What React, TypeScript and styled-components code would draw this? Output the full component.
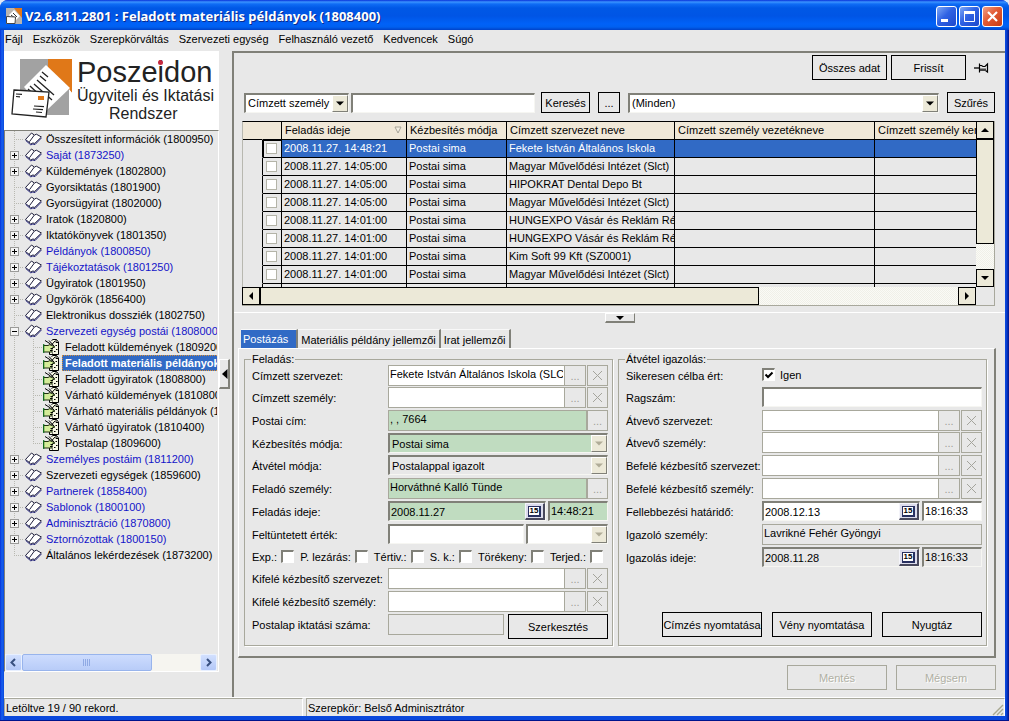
import React from 'react';
import styled, { createGlobalStyle, css } from 'styled-components';

const face = '#e8e8e8';
const shadow = '#808078';
const softLine = '#a8a89c';
const cream = '#ece9d8';
const navy = '#316ac5';
const green = '#c0dcc0';

const GlobalStyle = createGlobalStyle`
  * { box-sizing: border-box; }
  body { margin: 0; background: #dfe8f6; }
  body, button, input, select, table {
    font-family: "Liberation Sans", Arial, sans-serif;
    font-size: 11px;
    line-height: 14px;
    color: #000;
  }
  button, input, select { margin: 0; border-radius: 0; }
`;

/* ---------- window frame ---------- */

const Window = styled.div`
  display: flex;
  flex-direction: column;
  min-height: 100vh;
  padding: 0 4px 4px;
  background: linear-gradient(90deg, #0831d9 0, #1660ee 2px, #0a48dc 4px, #0a48dc calc(100% - 4px), #0a48dc calc(100% - 3px), #00138c 100%);
  border-bottom: 1px solid #00138c;
  border-radius: 8px 8px 0 0;
`;

const TitleBar = styled.header`
  display: flex;
  align-items: center;
  gap: 3px;
  height: 30px;
  margin: 0 -4px;
  padding: 2px 6px 0;
  border-radius: 8px 8px 0 0;
  background: linear-gradient(180deg, #0831d9 0, #3a93ff 2px, #0f6cf5 4px, #0058e6 8px, #0055e5 16px, #0062f8 24px, #0060f0 27px, #0042c8 30px);
`;

const Title = styled.h1`
  flex: 1;
  margin: 0;
  color: #fff;
  font-family: "Noto Sans", "Open Sans", sans-serif;
  font-size: 13px;
  font-weight: 700;
  line-height: 20px;
  text-shadow: 1px 1px 0 #0a2a8c;
  white-space: nowrap;
`;

const TitleButtons = styled.div`
  display: flex;
  gap: 2px;
`;

const CaptionButton = styled.button<{ $danger?: boolean }>`
  width: 21px;
  height: 21px;
  padding: 0;
  border: 1px solid #fff;
  border-radius: 3px;
  background: ${p => (p.$danger
    ? 'linear-gradient(135deg, #f0a088 0, #e25a34 45%, #c83c14 100%)'
    : 'linear-gradient(135deg, #7ea8f6 0, #2f62e4 45%, #1d48cc 100%)')};
  svg { display: block; }
`;

const MenuBar = styled.nav`
  display: flex;
  gap: 10px;
  height: 20px;
  padding: 2px 0 0 1px;
  background: ${face};
  a { color: #000; text-decoration: none; white-space: nowrap; }
`;

const Main = styled.main`
  flex: 1;
  display: flex;
  background: ${face};
`;

const StatusBar = styled.footer`
  display: flex;
  gap: 3px;
  height: 19px;
  border-top: 1px solid #fff;
  background: ${face};
`;

const StatusPanel = styled.div<{ $grow?: boolean }>`
  ${p => (p.$grow ? 'flex: 1;' : 'width: 299px;')}
  display: flex;
  justify-content: space-between;
  align-items: flex-end;
  border-top: 1px solid ${softLine};
  border-left: 1px solid ${softLine};
  border-right: 1px solid #fff;
  padding: 1px 0 0 1px;
  white-space: nowrap;
  span { align-self: center; }
`;

/* ---------- navigation ---------- */

const Side = styled.aside`
  display: flex;
  flex-direction: column;
  width: 215px;
  flex-shrink: 0;
`;

const Brand = styled.div`
  display: flex;
  gap: 4px;
  height: 79px;
  padding: 6px 0 0 6px;
  margin-top: 1px;
  background: #fff;
`;

const BrandText = styled.div`
  flex: 1;
  color: #222;
  white-space: nowrap;
`;

const BrandName = styled.div`
  position: relative;
  font-size: 29px;
  line-height: 30px;
`;

const BrandDot = styled.span`
  position: absolute;
  left: 81px;
  top: 3px;
  width: 5px;
  height: 5px;
  border-radius: 50%;
  background: #c42840;
`;

const BrandLine = styled.div<{ $indent?: boolean }>`
  font-size: 16px;
  line-height: 18px;
  ${p => (p.$indent ? 'padding-left: 32px;' : '')}
`;

const TreeBox = styled.div`
  flex: 1;
  display: flex;
  flex-direction: column;
  justify-content: space-between;
  margin-bottom: 25px;
  padding: 0 1px 0 0;
  border: 1px solid ${shadow};
  border-right-color: #fff;
  border-bottom-color: #fff;
  overflow: hidden;
`;

const TreeList = styled.ul`
  list-style: none;
  margin: 0;
  padding: 0;
  overflow: hidden;
`;

const TreeRow = styled.li`
  display: flex;
  height: 16px;
  overflow: hidden;
`;

const Branch = styled.span<{ $last?: boolean }>`
  position: relative;
  width: 19px;
  flex-shrink: 0;
  background:
    repeating-linear-gradient(180deg, #b8b8b0 0 1px, transparent 1px 2px) 9px 0 / 1px ${p => (p.$last ? '8px' : '16px')} no-repeat,
    repeating-linear-gradient(90deg, #b8b8b0 0 1px, transparent 1px 2px) 9px 8px / 10px 1px no-repeat;
`;

const Trunk = styled.span`
  width: 19px;
  flex-shrink: 0;
  background: repeating-linear-gradient(180deg, #b8b8b0 0 1px, transparent 1px 2px) 9px 0 / 1px 16px no-repeat;
`;

const Expander = styled.button`
  position: absolute;
  left: 5px;
  top: 4px;
  width: 9px;
  height: 9px;
  padding: 0;
  border: 1px solid #9a9a98;
  background: #f4f4f4;
  svg { display: block; }
`;

const TreeIcon = styled.span`
  width: 19px;
  flex-shrink: 0;
  svg { display: block; }
`;

const TreeLink = styled.a<{ $blue?: boolean; $selected?: boolean }>`
  padding: 1px 2px 1px 3px;
  color: ${p => (p.$blue ? '#1414c8' : '#000')};
  text-decoration: none;
  white-space: nowrap;
  ${p => p.$selected && css`
    background: ${navy};
    color: #fff;
    font-weight: 700;
    outline: 1px dotted #d89038;
    outline-offset: -1px;
  `}
`;

const SideScroll = styled.div`
  display: flex;
  height: 17px;
  background: #f6f5f0;
`;

const XpButton = styled.button`
  width: 17px;
  height: 17px;
  padding: 0;
  border: 1px solid #e8f0ff;
  border-radius: 2px;
  background: linear-gradient(180deg, #d2e0fe, #b4c8f8);
  svg { display: block; margin: auto; }
`;

const XpThumb = styled.div`
  width: 130px;
  display: flex;
  align-items: center;
  justify-content: center;
  border: 1px solid #98b4ec;
  border-radius: 2px;
  background: linear-gradient(180deg, #cddcfe, #b8ccf8);
`;

const Grow = styled.div`
  flex: 1;
`;

const SideSplitter = styled.div`
  width: 13px;
  flex-shrink: 0;
  display: flex;
  align-items: center;
`;

const CollapseSide = styled.button`
  width: 11px;
  height: 30px;
  padding: 0;
  border: 1px solid #fff;
  border-right: 2px solid ${shadow};
  border-bottom: 2px solid ${shadow};
  background: ${face};
  svg { display: block; }
`;

/* ---------- work area ---------- */

const Work = styled.section`
  flex: 1;
  min-width: 0;
  display: flex;
  flex-direction: column;
  margin-top: 1px;
  padding: 2px 9px 0 4px;
  border-top: 2px solid ${shadow};
  border-left: 2px solid ${shadow};
`;

const ToolRow = styled.div`
  display: flex;
  justify-content: flex-end;
  align-items: center;
  gap: 4px;
`;

const PushButton = styled.button<{ $w: number; $small?: boolean }>`
  width: ${p => p.$w}px;
  height: ${p => (p.$small ? 21 : 25)}px;
  padding: 0;
  border: 1px solid #000;
  background: ${face};
  white-space: nowrap;
  &:disabled { border-color: ${softLine}; color: #b0b0a4; text-shadow: 1px 1px 0 #fff; }
`;

const PinButton = styled.button`
  width: 26px;
  height: 25px;
  padding: 0;
  border: 0;
  background: none;
  svg { display: block; margin-left: 4px; }
`;

const FilterRow = styled.form`
  display: flex;
  align-items: center;
  gap: 8px;
  margin: 12px 1px 0 6px;
`;

const SearchPair = styled.div`
  display: flex;
  gap: 2px;
  margin-right: -2px;
`;

type Tone = 'white' | 'green' | 'face';
const toneColor = (t?: Tone) => (t === 'green' ? green : t === 'face' ? face : '#fff');

const sunken = css`
  border: 1px solid #f6f6f2;
  border-top: 2px solid ${shadow};
  border-left: 2px solid ${shadow};
`;

const SelectBox = styled.div<{ $w?: number }>`
  position: relative;
  display: flex;
  min-width: 0;
  ${p => (p.$w ? `width: ${p.$w}px;` : 'flex: 1;')}
  select {
    appearance: none;
    flex: 1;
    min-width: 0;
    height: 20px;
    padding: 0 17px 0 2px;
    ${sunken}
    opacity: 1;
    color: #000;
  }
`;

const StyledSelect = styled.select<{ $tone?: Tone }>`
  background: ${p => toneColor(p.$tone)};
`;

const SelectArrow = styled.span`
  position: absolute;
  right: 1px;
  top: 2px;
  width: 16px;
  height: 17px;
  border: 1px solid #fff;
  border-right-color: ${shadow};
  border-bottom-color: ${shadow};
  background: ${cream};
  pointer-events: none;
  svg { display: block; }
`;

const TextInput = styled.input<{ $w?: number; $tone?: Tone }>`
  ${p => (p.$w ? `width: ${p.$w}px;` : 'flex: 1;')}
  min-width: 0;
  height: 20px;
  padding: 0 1px 1px;
  ${sunken}
  background: ${p => toneColor(p.$tone)};
`;

/* ---------- grid ---------- */

const GridFrame = styled.div`
  display: grid;
  grid-template-columns: 1fr 18px;
  grid-template-rows: 166px 18px;
  margin: 8px 1px 0 4px;
  border-right: 1px solid ${softLine};
  border-bottom: 1px solid ${softLine};
`;

const GridView = styled.div`
  overflow: hidden;
  border-left: 1px solid #b8b8b0;
  border-top: 1px solid #000;
`;

const Table = styled.table`
  width: 833px;
  table-layout: fixed;
  border-collapse: separate;
  border-spacing: 0;
`;

const Th = styled.th<{ $bare?: boolean }>`
  height: 18px;
  padding: 0 4px 1px 3px;
  border-right: 1px solid ${p => (p.$bare ? '#f0e8d8' : '#000')};
  border-bottom: 1px solid #000;
  background: #f0e8d8;
  font-weight: 400;
  text-align: left;
  white-space: nowrap;
  overflow: hidden;
`;

const HeadFlex = styled.span`
  display: flex;
  justify-content: space-between;
  align-items: center;
`;

const Tr = styled.tr<{ $selected?: boolean }>`
  ${p => p.$selected && css`
    td:nth-child(n+3) { background: ${navy}; color: #fff; }
    td:nth-child(2) { box-shadow: inset 1px 1px 0 #000; }
  `}
`;

const Td = styled.td<{ $gutter?: boolean }>`
  height: 18px;
  padding: 0 0 1px 2px;
  border-right: 1px solid #000;
  border-bottom: 1px solid ${p => (p.$gutter ? face : '#000')};
  white-space: nowrap;
  overflow: hidden;
`;

const RowCheck = styled.input`
  appearance: none;
  display: block;
  width: 11px;
  height: 11px;
  margin: 1px 0 0 1px;
  border: 1px solid #b4b4a8;
  background: #fff;
`;

const dither = css`
  background: repeating-conic-gradient(#f0f0e8 0 25%, #fafaf6 0 50%) 0 0 / 2px 2px;
`;

const VScroll = styled.div`
  display: flex;
  flex-direction: column;
  ${dither}
`;

const HScroll = styled.div`
  display: flex;
  ${dither}
`;

const FlatButton = styled.button`
  width: 18px;
  height: 18px;
  padding: 0;
  border: 1px solid #000;
  background: ${cream};
  svg { display: block; }
`;

const FlatThumb = styled.div<{ $h?: string; $w?: string }>`
  height: ${p => p.$h ?? 'auto'};
  width: ${p => p.$w ?? 'auto'};
  border: 1px solid #000;
  background: ${cream};
`;

const Splitter = styled.div`
  display: flex;
  justify-content: center;
  height: 17px;
  margin: 6px -9px 0 -4px;
  border-top: 1px solid #fff;
`;

const CollapseBelow = styled.button`
  width: 30px;
  height: 10px;
  padding: 0;
  border: 1px solid #fff;
  border-right-color: ${shadow};
  border-bottom: 2px solid ${shadow};
  background: ${face};
  svg { display: block; margin: auto; }
`;

/* ---------- tabs and form ---------- */

const Tabs = styled.div`
  display: flex;
  height: 19px;
  padding-left: 3px;
`;

const Tab = styled.button<{ $active?: boolean }>`
  height: 19px;
  padding: ${p => (p.$active ? '0 8px 1px 2px' : '1px 3px 0')};
  border: 0;
  border-top: 1px solid #f8f8f8;
  border-right: 2px solid ${shadow};
  background: ${p => (p.$active ? navy : face)};
  color: ${p => (p.$active ? '#fff' : '#000')};
  white-space: nowrap;
`;

const TabPanel = styled.div`
  display: grid;
  grid-template-columns: 1fr 1fr;
  gap: 5px;
  padding: 4px 7px 10px 5px;
  border: 1px solid #fff;
  border-right: 2px solid ${shadow};
  border-bottom: 2px solid ${shadow};
`;

const Group = styled.fieldset`
  display: flex;
  flex-direction: column;
  min-width: 0;
  margin: 0;
  padding: 0 4px 8px 7px;
  border: 1px solid ${softLine};
  box-shadow: 1px 1px 0 #fff;
  legend { margin-left: -1px; padding: 0 1px; line-height: 12px; }
`;

const Row = styled.div<{ $tight?: boolean }>`
  display: flex;
  align-items: flex-start;
  height: ${p => (p.$tight ? 22 : 23)}px;
`;

const Label = styled.label`
  width: 136px;
  flex-shrink: 0;
  padding-top: 4px;
  white-space: nowrap;
`;

const Fields = styled.div<{ $gap?: number }>`
  flex: 1;
  min-width: 0;
  display: flex;
  gap: ${p => p.$gap ?? 0}px;
`;

const Memo = styled.input<{ $tone?: Tone }>`
  flex: 1;
  min-width: 0;
  height: 21px;
  padding: 0 1px 3px;
  border: 1px solid ${softLine};
  background: ${p => toneColor(p.$tone)};
  text-overflow: clip;
`;

const MemoButton = styled.button`
  width: 21px;
  height: 21px;
  padding: 0;
  border: 1px solid ${softLine};
  background: ${face};
  color: #a0a098;
  &:not(:last-child) { border-left: 0; margin-right: 1px; }
  svg { display: block; margin: auto; }
`;

const DateBox = styled.div<{ $tone?: Tone }>`
  flex: 1;
  min-width: 0;
  display: flex;
  height: 20px;
  ${sunken}
  background: ${p => toneColor(p.$tone)};
  input { flex: 1; min-width: 0; border: 0; padding: 0 1px; background: transparent; }
`;

const CalendarButton = styled.button`
  width: 20px;
  height: 17px;
  padding: 0;
  border: 1px solid #f4f4fa;
  border-right: 2px solid #48485c;
  border-bottom: 2px solid #48485c;
  background: #dcdcec;
`;

const DayGlyph = styled.span`
  display: block;
  width: 13px;
  height: 11px;
  margin: 0 auto;
  border: 1px solid #283060;
  border-width: 1px 2px 2px 1px;
  background: #fff;
  font-size: 8px;
  font-weight: 700;
  line-height: 8px;
`;

const ChecksRow = styled.div`
  display: flex;
  justify-content: space-between;
  height: 21px;
  padding-right: 5px;
`;

const CheckLabel = styled.label<{ $after?: boolean }>`
  display: flex;
  align-items: center;
  gap: ${p => (p.$after ? 5 : 4)}px;
  height: 19px;
  white-space: nowrap;
`;

const Check = styled.input`
  appearance: none;
  width: 13px;
  height: 13px;
  ${sunken}
  border-right-color: #fff;
  border-bottom-color: #fff;
  background: #fff;
  &:checked {
    background: #fff url("data:image/svg+xml,%3Csvg xmlns='http://www.w3.org/2000/svg' viewBox='0 0 10 10'%3E%3Cpath d='M1.5 4.5L4 7L8.5 2.5' fill='none' stroke='black' stroke-width='2'/%3E%3C/svg%3E") center / 10px 10px no-repeat;
  }
`;

const GroupButtons = styled.div`
  display: flex;
  justify-content: flex-end;
  gap: 10px;
  margin-top: auto;
`;

const ActionRow = styled.div`
  display: flex;
  justify-content: flex-end;
  gap: 9px;
  padding: 7px 0 7px;
`;

/* ---------- drawings ---------- */

const BookIcon = () => (
  <svg width="19" height="16" viewBox="0 0 19 16">
    <path d="M1.5 8.5L7.5 2L10 3.4L12.5 3L17.5 6L10.5 12.5L8.8 12L7 13Z" fill="#fff" />
    <path d="M6.5 12.4L1.5 8.5L7.5 2L10 3.8M5.4 10.8L10.4 4L12.4 3.2L17.4 6L10.8 12.4L8.8 12L6.8 13" fill="none" stroke="#20203c" />
    <path d="M1.6 9.4L6.8 13.9L8.8 13L11 13.6L17.4 7" fill="none" stroke="#28287c" />
  </svg>
);

const PostIcon = () => (
  <svg width="17" height="16" viewBox="0 0 17 16">
    <path d="M8.5 1.5L10 0.5H13.5L15.5 3V15.5H6.5V13" fill="#f8f8e4" stroke="#000" />
    <path d="M13 0.5V3.5H15.5M11 12.5H12.5M13 10.5H14.5M9 14H10M12.5 6.5H14" fill="none" stroke="#000" />
    <path d="M0.5 6.5H5L7 5.5L12 8L9 9V13H0.5Z" fill="#d4ec98" stroke="#203010" />
    <path d="M0.7 5V14" stroke="#107020" strokeWidth="1.2" />
    <path d="M2 1.5L7.5 5M7.5 9.5H10M7 11.5H9.5M12 2L8 6.5M6 1.5L11 7" stroke="#000" />
  </svg>
);

const LogoArt = () => (
  <svg width="63" height="64" viewBox="0 0 63 64">
    <rect x="10" y="2" width="49" height="56" fill="#a2a2a2" />
    <path d="M38 2H62V36L38 11Z" fill="#e07818" />
    <path d="M59 32L62 36V58H59Z" fill="#fff" />
    <path d="M36 8L60 31L36 54L14 30Z" fill="#fff" />
    <path d="M32 15L38 20M30 19L36 24M27 23L44 38M24 27L42 43M20 29L37 45M18 32L32 45" stroke="#222" strokeWidth="1.3" />
    <path d="M4 33L39 35L36 60L2 57Z" fill="#fff" stroke="#222" strokeWidth="1.3" />
    <rect x="28" y="39" width="6" height="4" fill="#e07818" />
    <path d="M6 37L12 37.4M6 39.5L10 39.8M24 49L34 49.6M23 52L33 52.7M26 55L32 55.5" stroke="#222" strokeWidth="1.2" />
  </svg>
);

const AppIcon = () => (
  <svg width="16" height="16" viewBox="0 0 16 16">
    <rect width="16" height="16" fill="#b8b4b0" />
    <path d="M8 0H16V10Z" fill="#e07818" />
    <path d="M8 2L14 8L8 14L3 7Z" fill="#fff" />
    <path d="M7 5L11 9M5 7L10 11" stroke="#333" />
    <path d="M0.5 8.5L9.5 9L9 15.5H0.5Z" fill="#fff" stroke="#444" />
  </svg>
);

const PinIcon = () => (
  <svg width="18" height="14" viewBox="0 0 18 14">
    <path d="M0 7H5" stroke="#000" strokeWidth="1.3" />
    <path d="M5.5 2.5V11.5M6 4.5H7.5L9 5.5H11L13.5 3V11L11.5 9.5H6" fill="none" stroke="#000" strokeWidth="1.2" />
    <path d="M6 7.5H12V10H6Z" fill="#444" />
  </svg>
);

const Triangle = ({ dir, w = 16, h = 16, color = '#000' }: { dir: 'up' | 'down' | 'left' | 'right'; w?: number; h?: number; color?: string }) => {
  const d = { up: 'M-4 2H4L0 -2Z', down: 'M-4 -2H4L0 2Z', left: 'M2 -4V4L-2 0Z', right: 'M-2 -4V4L2 0Z' }[dir];
  return (
    <svg width={w} height={h} viewBox={`${-w / 2} ${-h / 2} ${w} ${h}`}>
      <path d={d} fill={color} />
    </svg>
  );
};

const CrossIcon = () => (
  <svg width="11" height="11" viewBox="0 0 11 11">
    <path d="M1 1L10 10M10 1L1 10" stroke="#a4a49c" />
  </svg>
);

/* ---------- data ---------- */

type Node = { text: string; blue?: boolean; open?: boolean; leaf?: boolean; child?: boolean; selected?: boolean };

const nodes: Node[] = [
  { text: 'Összesített információk (1800950)', leaf: true },
  { text: 'Saját (1873250)', blue: true },
  { text: 'Küldemények (1802800)' },
  { text: 'Gyorsiktatás (1801900)', leaf: true },
  { text: 'Gyorsügyirat (1802000)', leaf: true },
  { text: 'Iratok (1820800)' },
  { text: 'Iktatókönyvek (1801350)' },
  { text: 'Példányok (1800850)', blue: true },
  { text: 'Tájékoztatások (1801250)', blue: true },
  { text: 'Ügyiratok (1801950)' },
  { text: 'Ügykörök (1856400)' },
  { text: 'Elektronikus dossziék (1802750)', leaf: true },
  { text: 'Szervezeti egység postái (1808000)', blue: true, open: true },
  { text: 'Feladott küldemények (1809200)', child: true },
  { text: 'Feladott materiális példányok (1808400)', child: true, selected: true },
  { text: 'Feladott ügyiratok (1808800)', child: true },
  { text: 'Várható küldemények (1810800)', child: true },
  { text: 'Várható materiális példányok (1810000)', child: true },
  { text: 'Várható ügyiratok (1810400)', child: true },
  { text: 'Postalap (1809600)', child: true },
  { text: 'Személyes postáim (1811200)', blue: true },
  { text: 'Szervezeti egységek (1859600)' },
  { text: 'Partnerek (1858400)', blue: true },
  { text: 'Sablonok (1800100)', blue: true },
  { text: 'Adminisztráció (1870800)', blue: true },
  { text: 'Sztornózottak (1800150)', blue: true },
  { text: 'Általános lekérdezések (1873200)', leaf: true },
];

const records = [
  ['2008.11.27. 14:48:21', 'Fekete István Általános Iskola'],
  ['2008.11.27. 14:05:00', 'Magyar Művelődési Intézet (Slct)'],
  ['2008.11.27. 14:05:00', 'HIPOKRAT Dental Depo Bt'],
  ['2008.11.27. 14:05:00', 'Magyar Művelődési Intézet (Slct)'],
  ['2008.11.27. 14:01:00', 'HUNGEXPO Vásár és Reklám Részvénytársaság'],
  ['2008.11.27. 14:01:00', 'HUNGEXPO Vásár és Reklám Részvénytársaság'],
  ['2008.11.27. 14:01:00', 'Kim Soft 99 Kft (SZ0001)'],
  ['2008.11.27. 14:01:00', 'Magyar Művelődési Intézet (Slct)'],
];

const columnWidths = [20, 19, 125, 100, 168, 200, 201];

const Col = styled.col<{ $w: number }>`
  width: ${p => p.$w}px;
`;

const menu = ['Fájl', 'Eszközök', 'Szerepkörváltás', 'Szervezeti egység', 'Felhasználó vezető', 'Kedvencek', 'Súgó'];

/* ---------- composed parts ---------- */

const TreeItem = ({ node, last }: { node: Node; last: boolean }) => (
  <TreeRow>
    {node.child && <Trunk />}
    <Branch $last={last}>
      {!node.leaf && !node.child && (
        <Expander aria-label={node.open ? 'Bezárás' : 'Kinyitás'}>
          <svg width="7" height="7" viewBox="0 0 7 7">
            <path d={node.open ? 'M1 3.5H6' : 'M1 3.5H6M3.5 1V6'} stroke="#000" />
          </svg>
        </Expander>
      )}
    </Branch>
    <TreeIcon>{node.child ? <PostIcon /> : <BookIcon />}</TreeIcon>
    <TreeLink href="#" $blue={node.blue} $selected={node.selected}>{node.text}</TreeLink>
  </TreeRow>
);

const Dropdown = ({ id, label, value, w, tone, disabled }: { id?: string; label?: string; value: string; w?: number; tone?: Tone; disabled?: boolean }) => (
  <SelectBox $w={w}>
    <StyledSelect id={id} aria-label={label} $tone={tone} disabled={disabled}>
      <option>{value}</option>
    </StyledSelect>
    <SelectArrow><Triangle dir="down" w={14} h={15} color={disabled ? '#b0ac98' : '#000'} /></SelectArrow>
  </SelectBox>
);

const LookupRow = ({ id, label, value = '', tone, tight, clear = true }: { id: string; label: string; value?: string; tone?: Tone; tight?: boolean; clear?: boolean }) => (
  <Row $tight={tight}>
    <Label htmlFor={id}>{label}</Label>
    <Fields>
      <Memo id={id} defaultValue={value} $tone={tone} />
      <MemoButton disabled>...</MemoButton>
      {clear && <MemoButton disabled aria-label="Törlés"><CrossIcon /></MemoButton>}
    </Fields>
  </Row>
);

const DateRow = ({ id, label, date, time, tone }: { id: string; label: string; date: string; time: string; tone?: Tone }) => (
  <Row>
    <Label htmlFor={id}>{label}</Label>
    <Fields $gap={2}>
      <DateBox $tone={tone}>
        <input id={id} defaultValue={date} />
        <CalendarButton aria-label="Naptár"><DayGlyph>15</DayGlyph></CalendarButton>
      </DateBox>
      <TextInput $w={60} $tone={tone} aria-label={`${label} idő`} defaultValue={time} />
    </Fields>
  </Row>
);

export default function App() {
  return (
    <>
      <GlobalStyle />
      <Window>
        <TitleBar>
          <AppIcon />
          <Title>V2.6.811.2801 : Feladott materiális példányok (1808400)</Title>
          <TitleButtons>
            <CaptionButton aria-label="Kis méret">
              <svg width="19" height="19" viewBox="0 0 19 19"><path d="M4 13.5H11" stroke="#fff" strokeWidth="3" /></svg>
            </CaptionButton>
            <CaptionButton aria-label="Teljes méret">
              <svg width="19" height="19" viewBox="0 0 19 19"><path d="M4.5 5V14.5H14.5V5" fill="none" stroke="#fff" /><path d="M4 5.5H15" stroke="#fff" strokeWidth="3" /></svg>
            </CaptionButton>
            <CaptionButton $danger aria-label="Bezárás">
              <svg width="19" height="19" viewBox="0 0 19 19"><path d="M5 5L14 14M14 5L5 14" stroke="#fff" strokeWidth="2.2" /></svg>
            </CaptionButton>
          </TitleButtons>
        </TitleBar>
        <MenuBar>
          {menu.map(m => <a href="#" key={m}>{m}</a>)}
        </MenuBar>
        <Main>
          <Side>
            <Brand>
              <LogoArt />
              <BrandText>
                <BrandName>Poszeidon<BrandDot /></BrandName>
                <BrandLine>Ügyviteli és Iktatási</BrandLine>
                <BrandLine $indent>Rendszer</BrandLine>
              </BrandText>
            </Brand>
            <TreeBox>
              <TreeList>
                {nodes.map((n, i) => (
                  <TreeItem key={n.text} node={n} last={i === nodes.length - 1 || n.text.startsWith('Postalap')} />
                ))}
              </TreeList>
              <SideScroll>
                <XpButton aria-label="Balra"><svg width="9" height="9" viewBox="0 0 9 9"><path d="M6 1L2.5 4.5L6 8" fill="none" stroke="#385080" strokeWidth="2" /></svg></XpButton>
                <XpThumb><svg width="8" height="7" viewBox="0 0 8 7"><path d="M0.5 0V7M2.5 0V7M4.5 0V7M6.5 0V7" stroke="#90aae4" /></svg></XpThumb>
                <Grow />
                <XpButton aria-label="Jobbra"><svg width="9" height="9" viewBox="0 0 9 9"><path d="M3 1L6.5 4.5L3 8" fill="none" stroke="#385080" strokeWidth="2" /></svg></XpButton>
              </SideScroll>
            </TreeBox>
          </Side>
          <SideSplitter>
            <CollapseSide aria-label="Oldalsáv elrejtése">
              <svg width="8" height="27" viewBox="0 0 8 27"><path d="M7.5 9V19L2 14Z" /></svg>
            </CollapseSide>
          </SideSplitter>
          <Work>
            <ToolRow>
              <PushButton $w={75}>Összes adat</PushButton>
              <PushButton $w={75}>Frissít</PushButton>
              <PinButton aria-label="Rögzítés"><PinIcon /></PinButton>
            </ToolRow>
            <FilterRow onSubmit={e => e.preventDefault()}>
              <SearchPair>
                <Dropdown label="Keresési mező" value="Címzett személy vezetékneve" w={105} />
                <TextInput $w={184} aria-label="Keresett szöveg" />
              </SearchPair>
              <PushButton $w={49} $small>Keresés</PushButton>
              <PushButton $w={22} $small>...</PushButton>
              <Dropdown label="Szűrő" value="(Minden)" />
              <PushButton $w={48} $small>Szűrés</PushButton>
            </FilterRow>
            <GridFrame>
              <GridView>
                <Table>
                  <colgroup>
                    {columnWidths.map((w, i) => <Col key={i} $w={w} />)}
                  </colgroup>
                  <thead>
                    <tr>
                      <Th $bare /><Th />
                      <Th><HeadFlex>Feladás ideje<svg width="8" height="8" viewBox="0 0 8 8"><path d="M1 1H7L4 7Z" fill="#f4f0e4" stroke="#a8a498" /></svg></HeadFlex></Th>
                      <Th>Kézbesítés módja</Th>
                      <Th>Címzett szervezet neve</Th>
                      <Th>Címzett személy vezetékneve</Th>
                      <Th>Címzett személy keresztneve</Th>
                    </tr>
                  </thead>
                  <tbody>
                    {records.map((r, i) => (
                      <Tr key={i} $selected={i === 0}>
                        <Td $gutter />
                        <Td><RowCheck type="checkbox" aria-label={`${i + 1}. sor kijelölése`} /></Td>
                        <Td>{r[0]}</Td>
                        <Td>Postai sima</Td>
                        <Td>{r[1]}</Td>
                        <Td /><Td />
                      </Tr>
                    ))}
                    <Tr><Td $gutter /><Td /><Td /><Td /><Td /><Td /><Td /></Tr>
                  </tbody>
                </Table>
              </GridView>
              <VScroll>
                <FlatButton aria-label="Fel"><Triangle dir="up" /></FlatButton>
                <FlatThumb $h="105px" />
                <Grow />
                <FlatButton aria-label="Le"><Triangle dir="down" /></FlatButton>
              </VScroll>
              <HScroll>
                <FlatButton aria-label="Balra"><Triangle dir="left" /></FlatButton>
                <FlatThumb $w="68%" />
                <Grow />
                <FlatButton aria-label="Jobbra"><Triangle dir="right" /></FlatButton>
              </HScroll>
            </GridFrame>
            <Splitter>
              <CollapseBelow aria-label="Részletek elrejtése"><Triangle dir="down" w={16} h={6} /></CollapseBelow>
            </Splitter>
            <Tabs role="tablist">
              <Tab role="tab" aria-selected $active>Postázás</Tab>
              <Tab role="tab">Materiális példány jellemzői</Tab>
              <Tab role="tab">Irat jellemzői</Tab>
            </Tabs>
            <TabPanel>
              <Group>
                <legend>Feladás:</legend>
                <LookupRow id="org" label="Címzett szervezet:" value="Fekete István Általános Iskola (SLCT)" tight />
                <LookupRow id="person" label="Címzett személy:" />
                <LookupRow id="addr" label="Postai cím:" value=", , 7664" tone="green" clear={false} />
                <Row $tight>
                  <Label htmlFor="mode">Kézbesítés módja:</Label>
                  <Fields><Dropdown id="mode" value="Postai sima" tone="green" disabled /></Fields>
                </Row>
                <Row>
                  <Label htmlFor="receipt">Átvétel módja:</Label>
                  <Fields><Dropdown id="receipt" value="Postalappal igazolt" tone="face" disabled /></Fields>
                </Row>
                <LookupRow id="sender" label="Feladó személy:" value="Horváthné Kalló Tünde" tone="green" clear={false} />
                <DateRow id="sent" label="Feladás ideje:" date="2008.11.27" time="14:48:21" tone="green" />
                <Row>
                  <Label htmlFor="value">Feltüntetett érték:</Label>
                  <Fields $gap={2}>
                    <TextInput id="value" />
                    <Dropdown label="Pénznem" value="" w={82} disabled />
                  </Fields>
                </Row>
                <ChecksRow>
                  {['Exp.:', 'P. lezárás:', 'Tértiv.:', 'S. k.:', 'Törékeny:', 'Terjed.:'].map(t => (
                    <CheckLabel key={t}>{t}<Check type="checkbox" /></CheckLabel>
                  ))}
                </ChecksRow>
                <LookupRow id="outorg" label="Kifelé kézbesítő szervezet:" />
                <LookupRow id="outperson" label="Kifelé kézbesítő személy:" />
                <Row>
                  <Label htmlFor="card">Postalap iktatási száma:</Label>
                  <Fields $gap={4}>
                    <Memo id="card" $tone="face" />
                    <PushButton $w={100}>Szerkesztés</PushButton>
                  </Fields>
                </Row>
              </Group>
              <Group>
                <legend>Átvétel igazolás:</legend>
                <Row $tight>
                  <Label htmlFor="ok">Sikeresen célba ért:</Label>
                  <CheckLabel $after><Check id="ok" type="checkbox" defaultChecked />Igen</CheckLabel>
                </Row>
                <Row>
                  <Label htmlFor="reg">Ragszám:</Label>
                  <Fields><TextInput id="reg" /></Fields>
                </Row>
                <LookupRow id="inorg" label="Átvevő szervezet:" tight />
                <LookupRow id="inperson" label="Átvevő személy:" />
                <LookupRow id="deliverorg" label="Befelé kézbesítő szervezet:" />
                <LookupRow id="deliverperson" label="Befelé kézbesítő személy:" />
                <DateRow id="appeal" label="Fellebbezési határidő:" date="2008.12.13" time="18:16:33" />
                <Row>
                  <Label htmlFor="certifier">Igazoló személy:</Label>
                  <Fields><Memo id="certifier" $tone="face" defaultValue="Lavrikné Fehér Gyöngyi" /></Fields>
                </Row>
                <DateRow id="certtime" label="Igazolás ideje:" date="2008.11.28" time="18:16:33" tone="face" />
                <GroupButtons>
                  <PushButton $w={100}>Címzés nyomtatása</PushButton>
                  <PushButton $w={100}>Vény nyomtatása</PushButton>
                  <PushButton $w={100}>Nyugtáz</PushButton>
                </GroupButtons>
              </Group>
            </TabPanel>
            <ActionRow>
              <PushButton $w={100} disabled>Mentés</PushButton>
              <PushButton $w={100} disabled>Mégsem</PushButton>
            </ActionRow>
          </Work>
        </Main>
        <StatusBar>
          <StatusPanel><span>Letöltve 19 / 90 rekord.</span></StatusPanel>
          <StatusPanel $grow>
            <span>Szerepkör: Belső Adminisztrátor</span>
            <svg width="12" height="12" viewBox="0 0 12 12"><path d="M11 1L1 11M11 5L5 11M11 9L9 11" stroke="#a8a890" strokeWidth="1.4" /></svg>
          </StatusPanel>
        </StatusBar>
      </Window>
    </>
  );
}
